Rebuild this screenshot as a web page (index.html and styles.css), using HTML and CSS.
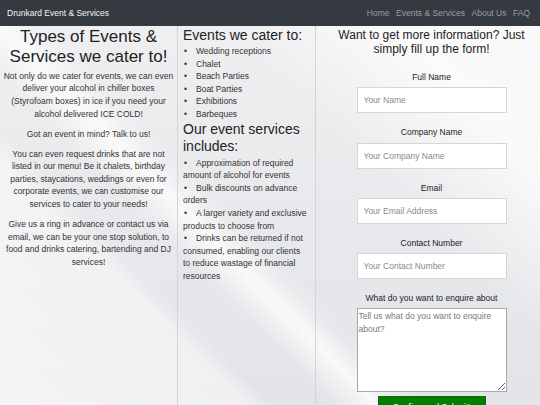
FILE: index.html
```html
<!DOCTYPE html>
<html lang="en">
<head>
<meta charset="utf-8">
<title>Drunkard Event &amp; Services</title>
<link rel="stylesheet" href="styles.css">
</head>
<body>
<nav class="navbar">
  <a class="brand" href="#">Drunkard Event &amp; Services</a>
  <ul class="nav-links">
    <li><a href="#">Home</a></li>
    <li><a href="#">Events &amp; Services</a></li>
    <li><a href="#">About Us</a></li>
    <li><a href="#">FAQ</a></li>
  </ul>
</nav>
<main class="columns">
  <section class="col col-intro">
    <h2 class="intro-title">Types of Events &amp; Services we cater to!</h2>
    <p>Not only do we cater for events, we can even deliver your alcohol in chiller boxes (Styrofoam boxes) in ice if you need your alcohol delivered ICE COLD!</p>
    <p>Got an event in mind? Talk to us!</p>
    <p>You can even request drinks that are not listed in our menu! Be it chalets, birthday parties, staycations, weddings or even for corporate events, we can customise our services to cater to your needs!</p>
    <p>Give us a ring in advance or contact us via email, we can be your one stop solution, to food and drinks catering, bartending and DJ services!</p>
  </section>
  <section class="col col-lists">
    <h3 class="list-title first">Events we cater to:</h3>
    <ul class="bullets">
      <li>Wedding receptions</li>
      <li>Chalet</li>
      <li>Beach Parties</li>
      <li>Boat Parties</li>
      <li>Exhibitions</li>
      <li>Barbeques</li>
    </ul>
    <h3 class="list-title">Our event services includes:</h3>
    <ul class="bullets">
      <li>Approximation of required amount of alcohol for events</li>
      <li>Bulk discounts on advance orders</li>
      <li>A larger variety and exclusive products to choose from</li>
      <li>Drinks can be returned if not consumed, enabling our clients to reduce wastage of financial resources</li>
    </ul>
  </section>
  <section class="col col-form">
    <h4 class="form-title">Want to get more information? Just simply fill up the form!</h4>
    <form class="enquiry">
      <div class="field">
        <label for="name">Full Name</label>
        <input id="name" type="text" placeholder="Your Name">
      </div>
      <div class="field">
        <label for="company">Company Name</label>
        <input id="company" type="text" placeholder="Your Company Name">
      </div>
      <div class="field">
        <label for="email">Email</label>
        <input id="email" type="email" placeholder="Your Email Address">
      </div>
      <div class="field">
        <label for="phone">Contact Number</label>
        <input id="phone" type="text" placeholder="Your Contact Number">
      </div>
      <div class="field field-area">
        <label for="msg">What do you want to enquire about</label>
        <textarea id="msg" placeholder="Tell us what do you want to enquire about?"></textarea>
      </div>
      <button class="submit" type="button">Confirm and Submit!</button>
    </form>
  </section>
</main>
</body>
</html>
```
FILE: styles.css
```css
* { box-sizing: border-box; }
html, body { height: 100%; }
body {
  margin: 0;
  font-family: "Liberation Sans", Arial, sans-serif;
  font-size: 8.5px;
  line-height: 12.6px;
  color: #333;
  overflow: hidden;
  background:
    linear-gradient(45deg, rgba(255,255,255,.6) 0%, rgba(255,255,255,.45) 26%, rgba(255,255,255,0) 29%),
    linear-gradient(45deg, rgba(255,255,255,0) 35%, rgba(255,255,255,.75) 40%, rgba(255,255,255,.2) 43%, rgba(255,255,255,0) 45%),
    linear-gradient(45deg, rgba(255,255,255,0) 64%, rgba(255,255,255,.75) 82%, rgba(255,255,255,.55) 100%),
    linear-gradient(180deg, #f0f0f2 0%, #e7e8eb 60%, #e3e4e8 100%);
}
.navbar {
  height: 26px;
  background: #343a40;
  display: flex;
  align-items: center;
  justify-content: space-between;
  padding: 0 10px 0 7px;
}
.brand {
  color: #f2f2f2;
  text-decoration: none;
  font-size: 8.5px;
}
.nav-links {
  list-style: none;
  margin: 0;
  padding: 0;
  display: flex;
  gap: 6.5px;
}
.nav-links a {
  color: #9a9da1;
  text-decoration: none;
  font-size: 8.5px;
}
.columns {
  display: grid;
  grid-template-columns: 178px 138px 1fr;
  min-height: 379px;
}
.col { min-height: 379px; padding-top: 1px; }
.col-intro {
  border-right: 1px solid #d3d4d8;
  padding-left: 3px;
  padding-right: 3px;
  text-align: center;
}
.col-lists {
  border-right: 1px solid #d3d4d8;
  padding-left: 5px;
  padding-right: 8px;
}
.col-form {
  padding-left: 7px;
  text-align: center;
}
.intro-title {
  font-size: 17px;
  line-height: 20.4px;
  font-weight: normal;
  margin: 0 0 2px;
  color: #222;
}
.col-intro p { margin: 0 0 7.4px; }
.list-title {
  font-size: 14px;
  line-height: 17px;
  font-weight: normal;
  margin: 0 0 2px;
  color: #222;
}
.list-title.first { margin-bottom: 1px; }
.bullets {
  list-style: none;
  margin: 0;
  padding: 0;
}
.bullets li::before {
  content: "\2022";
  display: inline-block;
  width: 12px;
  padding-left: 1px;
}
.form-title {
  font-size: 12px;
  line-height: 14px;
  font-weight: normal;
  margin: 0 0 15px;
  color: #222;
  padding-top: 1px;
}
.enquiry {
  display: flex;
  flex-direction: column;
  align-items: center;
}
.field {
  display: flex;
  flex-direction: column;
  align-items: center;
  margin-bottom: 13px;
}
.field label {
  display: block;
  margin-bottom: 3.7px;
  color: #222;
}
.field input {
  width: 150px;
  height: 26px;
  border: 1px solid #d6d6d6;
  background: #fff;
  padding: 0 6px;
  font-family: inherit;
  font-size: 8.5px;
  color: #333;
  outline: none;
}
.field input::placeholder { color: #8a8a8a; }
.field-area { margin-bottom: 4px; }
.field textarea {
  width: 150px;
  height: 84px;
  border: 1px solid #a9a9a9;
  background: #fff;
  padding: 1px;
  font-family: inherit;
  font-size: 8.5px;
  line-height: 12.6px;
  text-align: left;
  resize: vertical;
}
.field textarea::placeholder { color: #7a7a7a; }
.submit {
  width: 108px;
  height: 22px;
  background: #008000;
  border: 1px solid #007000;
  color: #fff;
  font-family: inherit;
  font-size: 8.5px;
  padding: 0;
}
```
